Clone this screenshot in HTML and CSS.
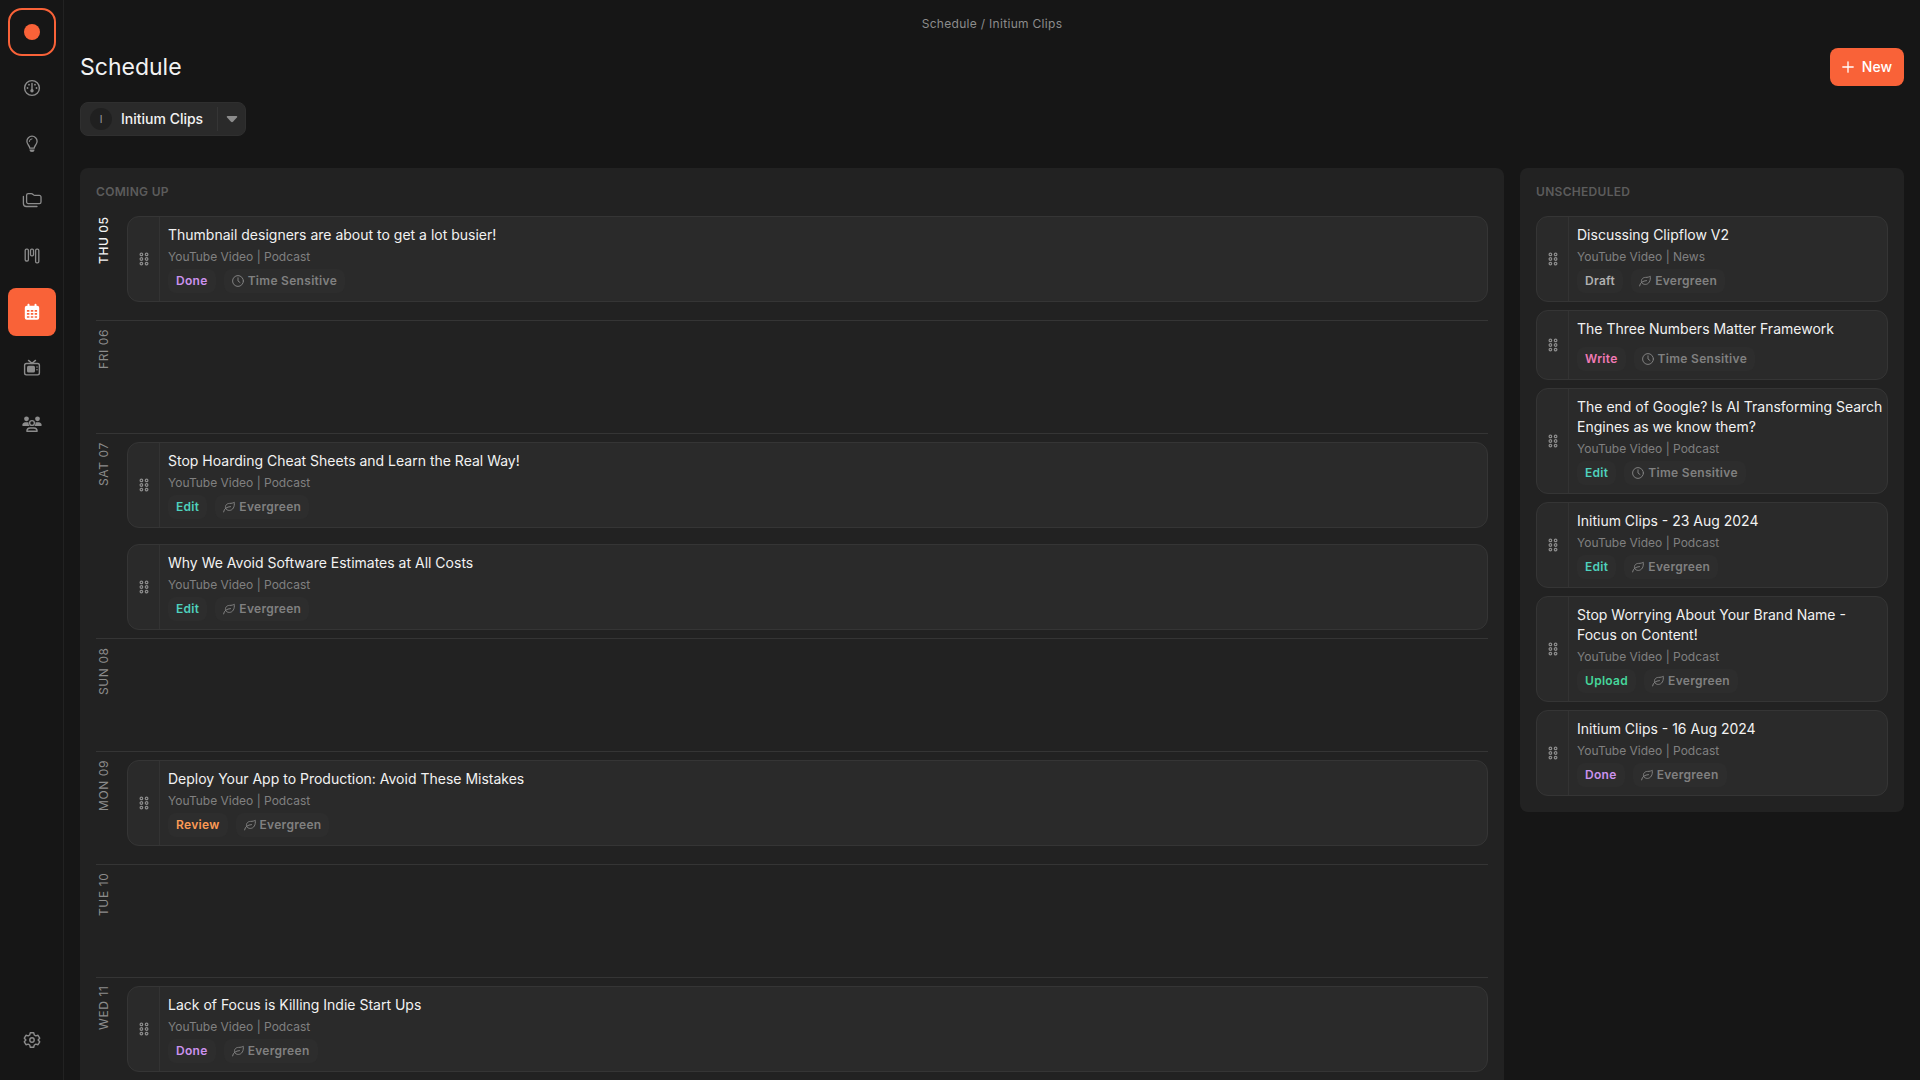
FILE: index.html
```html
<!DOCTYPE html>
<html lang="en">

<head>
    <meta charset="UTF-8">
    <meta name="viewport" content="width=device-width, initial-scale=1.0">
    <title>Schedule / Initium Clips</title>
    <link rel="stylesheet" href="styles.css">
</head>

<body>
    <!-- Shared icons -->
    <svg class="icon-defs" aria-hidden="true">
        <symbol id="icon-grip" viewBox="0 0 10 14">
            <g fill="none" stroke="currentColor" stroke-width="1.2">
                <circle cx="2.4" cy="2.4" r="1.3" />
                <circle cx="7.6" cy="2.4" r="1.3" />
                <circle cx="2.4" cy="7" r="1.3" />
                <circle cx="7.6" cy="7" r="1.3" />
                <circle cx="2.4" cy="11.6" r="1.3" />
                <circle cx="7.6" cy="11.6" r="1.3" />
            </g>
        </symbol>
        <symbol id="icon-clock" viewBox="0 0 12 12">
            <g fill="none" stroke="currentColor" stroke-linecap="round" stroke-linejoin="round">
                <circle cx="6" cy="6" r="5.4" />
                <path d="M6 2.8V6l2 1.5" />
            </g>
        </symbol>
        <symbol id="icon-leaf" viewBox="0 0 12 12">
            <g fill="none" stroke="currentColor" stroke-linecap="round" stroke-linejoin="round">
                <path d="M.6 10.9C1.2 7.6 3.6 5.9 7.5 5.6" />
                <path d="M2.5 7.4C1.8 4.4 3.7 2.5 6.5 2.4 8.7 2.3 10.2 2.1 11.2 1.2 11.9 5.6 9.9 9.4 6.3 9.4 4.8 9.4 3.5 8.9 2.5 7.4Z" />
            </g>
        </symbol>
    </svg>

    <div class="app">
        <aside class="sidebar">
            <a href="#" class="logo" aria-label="Home"><span class="logo-dot"></span></a>

            <nav class="nav" aria-label="Main">
                <a href="#" class="nav-link" aria-label="Dashboard">
                    <svg class="nav-icon" viewBox="0 0 20 20" fill="none" stroke="currentColor">
                        <circle cx="10" cy="10" r="7.4" stroke-width="1.4" />
                        <path d="M10 5.5V12" stroke-width="1.4" stroke-linecap="round" />
                        <circle cx="10" cy="12.8" r="1.7" fill="currentColor" stroke="none" />
                        <g fill="currentColor" stroke="none">
                            <circle cx="7" cy="6.7" r=".9" />
                            <circle cx="13" cy="6.7" r=".9" />
                            <circle cx="5.5" cy="10" r=".9" />
                            <circle cx="14.5" cy="10" r=".9" />
                        </g>
                    </svg>
                </a>
                <a href="#" class="nav-link" aria-label="Ideas">
                    <svg class="nav-icon" viewBox="0 0 20 20" fill="none" stroke="currentColor" stroke-width="1.3" stroke-linecap="round">
                        <path d="M7.8 14.2C7.8 11.7 4.9 10.6 4.9 7.3a5.1 5.1 0 0 1 10.2 0c0 3.3-2.9 4.4-2.9 6.9Z" stroke-linejoin="round" />
                        <path d="M7.3 7.5A2.7 2.7 0 0 1 10 4.8" stroke-width="1" />
                        <path d="M7.5 15.5h5a2.5 2.5 0 0 1-5 0Z" fill="currentColor" stroke="none" />
                    </svg>
                </a>
                <a href="#" class="nav-link" aria-label="Projects">
                    <svg class="nav-icon" viewBox="0 0 20 20" fill="none" stroke="currentColor" stroke-width="1.3" stroke-linecap="round" stroke-linejoin="round">
                        <path d="M6.2 3.6h3.2c.6 0 1 .2 1.4.6l.7.7c.3.3.7.5 1.2.5h4.7a1.6 1.6 0 0 1 1.6 1.6v5a1.6 1.6 0 0 1-1.6 1.6H6.2a1.6 1.6 0 0 1-1.6-1.6V5.2a1.6 1.6 0 0 1 1.6-1.6Z" />
                        <path d="M1.4 6.4v7.1a3 3 0 0 0 3 3H15" />
                    </svg>
                </a>
                <a href="#" class="nav-link" aria-label="Board">
                    <svg class="nav-icon" viewBox="0 0 20 20" fill="none" stroke="currentColor" stroke-width="1.3">
                        <rect x="3.2" y="3.2" width="3.2" height="11.8" rx="1.2" />
                        <rect x="8.5" y="3.2" width="3" height="6.6" rx="1.2" />
                        <rect x="13.6" y="3.2" width="3.2" height="13.6" rx="1.2" />
                    </svg>
                </a>
                <a href="#" class="nav-link active" aria-label="Schedule" aria-current="page">
                    <svg class="nav-icon" viewBox="0 0 20 20" fill="currentColor" fill-rule="evenodd">
                        <path d="M6.5 1.8c.6 0 1 .4 1 1v1h5v-1a1 1 0 0 1 2 0v1h.7a2 2 0 0 1 2 2v10a2 2 0 0 1-2 2H4.8a2 2 0 0 1-2-2v-10a2 2 0 0 1 2-2h.7v-1c0-.6.4-1 1-1ZM4.9 8v1.7h2.5V8Zm3.9 0v1.7h2.5V8Zm3.9 0v1.7h2.4V8ZM4.9 11.1v1.7h2.5v-1.7Zm3.9 0v1.7h2.5v-1.7Zm3.9 0v1.7h2.4v-1.7ZM4.9 14.2v1.5h2.5v-1.5Zm3.9 0v1.5h2.5v-1.5Zm3.9 0v1.5h2.4v-1.5Z" />
                    </svg>
                </a>
                <a href="#" class="nav-link" aria-label="Channels">
                    <svg class="nav-icon" viewBox="0 0 20 20" fill="none" stroke="currentColor" stroke-width="1.4" stroke-linecap="round">
                        <rect x="2.6" y="5.5" width="14.8" height="11.4" rx="1.8" />
                        <path d="m6.5 2.4 3.5 3 3.5-3" stroke-linejoin="round" />
                        <rect x="5" y="7.8" width="8" height="6.8" rx="1.5" fill="currentColor" stroke="none" />
                        <g fill="currentColor" stroke="none">
                            <circle cx="15" cy="9" r=".8" />
                            <circle cx="15" cy="11.8" r=".8" />
                        </g>
                    </svg>
                </a>
                <a href="#" class="nav-link" aria-label="Team">
                    <svg class="nav-icon" viewBox="0 0 20 20" fill="currentColor">
                        <circle cx="4.5" cy="4.8" r="2.4" />
                        <circle cx="15.5" cy="4.8" r="2.4" />
                        <path d="M.3 11.3c0-1.8 1.2-3.1 3-3.1h1.9c.6 0 1 .1 1.4.3-.2 1.4.2 2.5 1.1 3.5H1a.7.7 0 0 1-.7-.7ZM19.7 11.3c0-1.8-1.2-3.1-3-3.1h-1.9c-.6 0-1 .1-1.4.3.2 1.4-.2 2.5-1.1 3.5H19a.7.7 0 0 0 .7-.7Z" />
                        <g fill="none" stroke="currentColor" stroke-width="1.4">
                            <circle cx="10" cy="9" r="2.4" />
                            <path d="M4.9 17.2c0-2 1.4-3.2 3.2-3.2h3.8c1.8 0 3.2 1.2 3.2 3.2Z" stroke-linejoin="round" />
                        </g>
                    </svg>
                </a>
            </nav>

            <a href="#" class="nav-link" aria-label="Settings">
                <svg class="nav-icon" viewBox="0 0 20 20" fill="none" stroke="currentColor" stroke-width="1.4" stroke-linejoin="round">
                    <path d="M8.3 2.8h3.4l.6 2.2 1.5.9 2.2-.6 1.7 2.9-1.6 1.8 1.6 1.8-1.7 2.9-2.2-.6-1.5.9-.6 2.2H8.3L7.7 15l-1.5-.9-2.2.6-1.7-2.9L3.9 10 2.3 8.2 4 5.3l2.2.6L7.7 5Z" />
                    <circle cx="10" cy="10" r="2.2" />
                </svg>
            </a>
        </aside>

        <main class="main">
            <div class="breadcrumb">Schedule / Initium Clips</div>

            <header class="page-header">
                <h1>Schedule</h1>
                <button type="button" class="new-btn">
                    <svg class="plus-icon" viewBox="0 0 12 12" fill="none" stroke="currentColor" stroke-width="1.3" stroke-linecap="round">
                        <path d="M6 .8v10.4M.8 6h10.4" />
                    </svg>
                    New
                </button>
            </header>

            <div class="channel-picker">
                <label for="channel" class="avatar" title="Channel">I</label>
                <select id="channel" class="channel-select">
                    <option>Initium Clips</option>
                </select>
                <span class="caret">
                    <svg class="caret-icon" viewBox="0 0 12 8" fill="currentColor">
                        <path d="M1.5 1h9c.7 0 1 .8.6 1.3L7 6.8c-.6.6-1.4.6-2 0L.9 2.3C.5 1.8.8 1 1.5 1Z" />
                    </svg>
                </span>
            </div>

            <div class="boards">
                <section class="panel">
                    <h2>Coming up</h2>

                    <div class="day today">
                        <h3>Thu 05</h3>
                        <div class="day-items">
                            <article class="card">
                                <button type="button" class="handle" aria-label="Move"><svg><use href="#icon-grip" /></svg></button>
                                <div class="card-body">
                                    <h4>Thumbnail designers are about to get a lot busier!</h4>
                                    <p class="meta">YouTube Video | Podcast</p>
                                    <div class="tags">
                                        <span class="tag done">Done</span>
                                        <span class="tag"><svg><use href="#icon-clock" /></svg>Time Sensitive</span>
                                    </div>
                                </div>
                            </article>
                        </div>
                    </div>

                    <div class="day">
                        <h3>Fri 06</h3>
                        <div class="day-items"></div>
                    </div>

                    <div class="day">
                        <h3>Sat 07</h3>
                        <div class="day-items">
                            <article class="card">
                                <button type="button" class="handle" aria-label="Move"><svg><use href="#icon-grip" /></svg></button>
                                <div class="card-body">
                                    <h4>Stop Hoarding Cheat Sheets and Learn the Real Way!</h4>
                                    <p class="meta">YouTube Video | Podcast</p>
                                    <div class="tags">
                                        <span class="tag edit">Edit</span>
                                        <span class="tag"><svg><use href="#icon-leaf" /></svg>Evergreen</span>
                                    </div>
                                </div>
                            </article>
                            <article class="card">
                                <button type="button" class="handle" aria-label="Move"><svg><use href="#icon-grip" /></svg></button>
                                <div class="card-body">
                                    <h4>Why We Avoid Software Estimates at All Costs</h4>
                                    <p class="meta">YouTube Video | Podcast</p>
                                    <div class="tags">
                                        <span class="tag edit">Edit</span>
                                        <span class="tag"><svg><use href="#icon-leaf" /></svg>Evergreen</span>
                                    </div>
                                </div>
                            </article>
                        </div>
                    </div>

                    <div class="day">
                        <h3>Sun 08</h3>
                        <div class="day-items"></div>
                    </div>

                    <div class="day">
                        <h3>Mon 09</h3>
                        <div class="day-items">
                            <article class="card">
                                <button type="button" class="handle" aria-label="Move"><svg><use href="#icon-grip" /></svg></button>
                                <div class="card-body">
                                    <h4>Deploy Your App to Production: Avoid These Mistakes</h4>
                                    <p class="meta">YouTube Video | Podcast</p>
                                    <div class="tags">
                                        <span class="tag review">Review</span>
                                        <span class="tag"><svg><use href="#icon-leaf" /></svg>Evergreen</span>
                                    </div>
                                </div>
                            </article>
                        </div>
                    </div>

                    <div class="day">
                        <h3>Tue 10</h3>
                        <div class="day-items"></div>
                    </div>

                    <div class="day">
                        <h3>Wed 11</h3>
                        <div class="day-items">
                            <article class="card">
                                <button type="button" class="handle" aria-label="Move"><svg><use href="#icon-grip" /></svg></button>
                                <div class="card-body">
                                    <h4>Lack of Focus is Killing Indie Start Ups</h4>
                                    <p class="meta">YouTube Video | Podcast</p>
                                    <div class="tags">
                                        <span class="tag done">Done</span>
                                        <span class="tag"><svg><use href="#icon-leaf" /></svg>Evergreen</span>
                                    </div>
                                </div>
                            </article>
                        </div>
                    </div>
                </section>

                <section class="panel">
                    <h2>Unscheduled</h2>

                    <div class="backlog">
                        <article class="card">
                            <button type="button" class="handle" aria-label="Move"><svg><use href="#icon-grip" /></svg></button>
                            <div class="card-body">
                                <h4>Discussing Clipflow V2</h4>
                                <p class="meta">YouTube Video | News</p>
                                <div class="tags">
                                    <span class="tag draft">Draft</span>
                                    <span class="tag"><svg><use href="#icon-leaf" /></svg>Evergreen</span>
                                </div>
                            </div>
                        </article>
                        <article class="card">
                            <button type="button" class="handle" aria-label="Move"><svg><use href="#icon-grip" /></svg></button>
                            <div class="card-body">
                                <h4>The Three Numbers Matter Framework</h4>
                                <div class="tags">
                                    <span class="tag write">Write</span>
                                    <span class="tag"><svg><use href="#icon-clock" /></svg>Time Sensitive</span>
                                </div>
                            </div>
                        </article>
                        <article class="card">
                            <button type="button" class="handle" aria-label="Move"><svg><use href="#icon-grip" /></svg></button>
                            <div class="card-body">
                                <h4>The end of Google? Is AI Transforming Search Engines as we know them?</h4>
                                <p class="meta">YouTube Video | Podcast</p>
                                <div class="tags">
                                    <span class="tag edit">Edit</span>
                                    <span class="tag"><svg><use href="#icon-clock" /></svg>Time Sensitive</span>
                                </div>
                            </div>
                        </article>
                        <article class="card">
                            <button type="button" class="handle" aria-label="Move"><svg><use href="#icon-grip" /></svg></button>
                            <div class="card-body">
                                <h4>Initium Clips - 23 Aug 2024</h4>
                                <p class="meta">YouTube Video | Podcast</p>
                                <div class="tags">
                                    <span class="tag edit">Edit</span>
                                    <span class="tag"><svg><use href="#icon-leaf" /></svg>Evergreen</span>
                                </div>
                            </div>
                        </article>
                        <article class="card">
                            <button type="button" class="handle" aria-label="Move"><svg><use href="#icon-grip" /></svg></button>
                            <div class="card-body">
                                <h4>Stop Worrying About Your Brand Name - Focus on Content!</h4>
                                <p class="meta">YouTube Video | Podcast</p>
                                <div class="tags">
                                    <span class="tag upload">Upload</span>
                                    <span class="tag"><svg><use href="#icon-leaf" /></svg>Evergreen</span>
                                </div>
                            </div>
                        </article>
                        <article class="card">
                            <button type="button" class="handle" aria-label="Move"><svg><use href="#icon-grip" /></svg></button>
                            <div class="card-body">
                                <h4>Initium Clips - 16 Aug 2024</h4>
                                <p class="meta">YouTube Video | Podcast</p>
                                <div class="tags">
                                    <span class="tag done">Done</span>
                                    <span class="tag"><svg><use href="#icon-leaf" /></svg>Evergreen</span>
                                </div>
                            </div>
                        </article>
                    </div>
                </section>
            </div>
        </main>
    </div>
</body>

</html>
```

FILE: styles.css
```css
* {
    margin: 0;
    padding: 0;
    box-sizing: border-box;
}

body {
    font-family: Inter, sans-serif;
    font-size: 14px;
    line-height: 20px;
    background-color: #161616;
    color: #f2f2f2;
}

button,
select {
    font: inherit;
    color: inherit;
    background: none;
    border: none;
    cursor: pointer;
}

a {
    color: inherit;
    text-decoration: none;
}

.icon-defs {
    display: none;
}

.app {
    display: flex;
    height: 100vh;
}

/* Sidebar */
.sidebar {
    display: flex;
    flex-direction: column;
    gap: 8px;
    padding: 8px 7px 16px 8px;
    border-right: 1px solid #222;
}

.logo,
.nav-link {
    display: flex;
    align-items: center;
    justify-content: center;
    width: 48px;
    height: 48px;
    color: #8c8c8c;
}

.logo {
    border: 2px solid #f96238;
    border-radius: 14px;
}

.logo-dot {
    width: 16px;
    height: 16px;
    border-radius: 50%;
    background-color: #f96238;
}

.nav {
    display: flex;
    flex: 1;
    flex-direction: column;
    gap: 8px;
}

.nav-link {
    border-radius: 8px;
}

.nav-link:hover {
    background-color: #222;
}

.nav-link.active {
    background-color: #f96238;
    color: white;
}

.nav-icon {
    width: 20px;
    height: 20px;
}

/* Page */
.main {
    flex: 1;
    min-width: 0;
    padding: 16px;
    overflow-y: auto;
    scrollbar-width: none;
}

.breadcrumb {
    font-size: 12px;
    line-height: 16px;
    letter-spacing: 0.025em;
    text-align: center;
    color: #8c8c8c;
}

.page-header {
    display: flex;
    align-items: center;
    justify-content: space-between;
    margin: 16px 0;
}

h1 {
    font-size: 23px;
    font-weight: 400;
    line-height: 32px;
}

.new-btn {
    display: flex;
    align-items: center;
    gap: 8px;
    padding: 9px 12px;
    border-radius: 8px;
    background-color: #f96238;
    color: white;
    font-weight: 500;
}

.plus-icon {
    width: 12px;
    height: 12px;
}

/* Avatar, select and caret share one grid cell */
.channel-picker {
    display: inline-grid;
    align-items: center;
    margin-bottom: 32px;
    border: 1px solid #2f2f2f;
    border-radius: 8px;
    background-color: #2a2a2a;
    vertical-align: top;
}

.avatar,
.channel-select,
.caret {
    grid-area: 1 / 1;
}

.avatar {
    width: 22px;
    height: 22px;
    margin-left: 9px;
    border-radius: 50%;
    background-color: #202020;
    color: #a0a0a0;
    font-size: 10px;
    line-height: 22px;
    text-align: center;
}

.channel-select {
    appearance: none;
    height: 32px;
    padding: 0 41px 0 40px;
    font-weight: 500;
}

.caret {
    display: flex;
    align-items: center;
    justify-content: center;
    justify-self: end;
    width: 28px;
    height: 24px;
    border-left: 1px solid #353535;
    color: #8c8c8c;
    pointer-events: none;
}

.caret-icon {
    width: 12px;
    height: 8px;
}

/* Panels */
.boards {
    display: grid;
    grid-template-columns: 1fr 384px;
    gap: 16px;
    align-items: start;
}

.panel {
    padding: 16px;
    border-radius: 8px;
    background-color: #222;
}

h2 {
    margin-bottom: 8px;
    color: #5c5c5c;
    font-size: 12px;
    font-weight: 600;
    line-height: 16px;
    letter-spacing: 0.025em;
    text-transform: uppercase;
}

.day {
    display: flex;
    gap: 15px;
    border-bottom: 1px solid #353535;
}

.day:last-child {
    border-bottom: none;
}

.day h3 {
    writing-mode: vertical-rl;
    transform: rotate(180deg);
    padding-bottom: 8px;
    color: #8c8c8c;
    font-size: 12px;
    font-weight: 400;
    line-height: 16px;
    letter-spacing: 0.05em;
    text-align: right;
    text-transform: uppercase;
}

.day.today h3 {
    color: #f2f2f2;
    font-weight: 500;
}

.day-items {
    display: flex;
    flex: 1;
    flex-direction: column;
    gap: 16px;
    min-height: 112px;
    padding: 8px 0;
}

.backlog {
    display: flex;
    flex-direction: column;
    gap: 8px;
    padding-top: 8px;
}

/* Cards */
.card {
    display: flex;
    border: 1px solid #353535;
    border-radius: 12px;
    background-color: #2a2a2a;
}

.handle {
    display: flex;
    align-items: center;
    justify-content: center;
    width: 32px;
    border-right: 1px solid #333;
    color: #8c8c8c;
    cursor: grab;
}

.handle svg {
    width: 10px;
    height: 14px;
}

.card-body {
    display: flex;
    flex: 1;
    flex-direction: column;
    padding: 8px 4px 8px 8px;
}

.card h4 {
    margin-bottom: 4px;
    font-size: 14px;
    font-weight: 400;
}

.meta {
    color: #808080;
    font-size: 12px;
    line-height: 16px;
}

.tags {
    display: flex;
    gap: 8px;
    margin-top: 4px;
}

.tag {
    display: flex;
    align-items: center;
    gap: 4px;
    padding: 4px 8px;
    border-radius: 8px;
    background-color: #2d2d2d;
    color: #808080;
    font-size: 12px;
    font-weight: 600;
    line-height: 16px;
    letter-spacing: 0.025em;
}

.tag svg {
    width: 12px;
    height: 12px;
}

.tag.draft {
    color: #b0b0b0;
}

.tag.write {
    color: #f07ab4;
}

.tag.edit {
    color: #4fd1bd;
}

.tag.review {
    color: #fb9a55;
}

.tag.upload {
    color: #46d69b;
}

.tag.done {
    color: #cb92ee;
}
```
